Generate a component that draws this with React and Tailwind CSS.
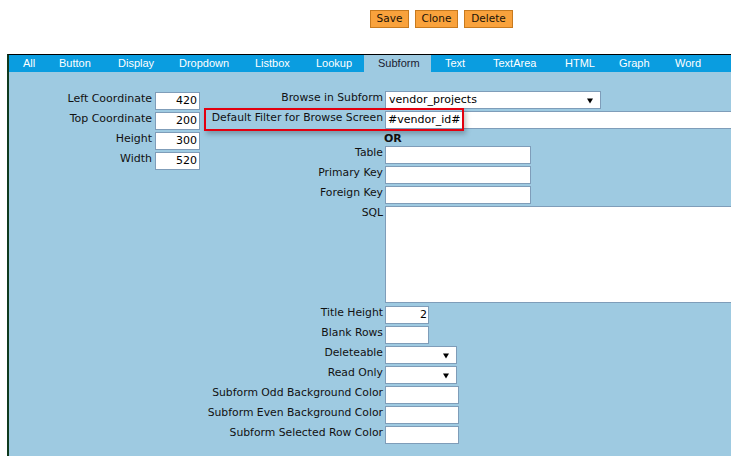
import React from 'react';

const tabs = [
    { name: 'All', w: 'w-[36px]' },
    { name: 'Button', w: 'w-[59px]' },
    { name: 'Display', w: 'w-[61px]' },
    { name: 'Dropdown', w: 'w-[76px]' },
    { name: 'Listbox', w: 'w-[61px]' },
    { name: 'Lookup', w: 'w-[62px]' },
    { name: 'Subform', w: 'w-[67px]', active: true },
    { name: 'Text', w: 'w-[48px]' },
    { name: 'TextArea', w: 'w-[72px]' },
    { name: 'HTML', w: 'w-[54px]' },
    { name: 'Graph', w: 'w-[56px]' },
    { name: 'Word', w: 'w-[56px]' },
];

const leftFields = [
    { label: 'Left Coordinate', value: '420' },
    { label: 'Top Coordinate', value: '200' },
    { label: 'Height', value: '300' },
    { label: 'Width', value: '520' },
];

const Arrow = () => (
    <svg width="6" height="6" viewBox="0 0 6 6" className="absolute right-[7px] top-[6px]">
        <polygon points="0,0.5 6,0.5 3,5.5" fill="#000" />
    </svg>
);

const Box = ({ className = '', children }) => (
    <div className={`h-[18px] bg-white border border-[#7f9db9] text-[11px] leading-[16px] text-black ${className}`}>
        {children}
    </div>
);

const Select = ({ className = '', value = '' }) => (
    <Box className={`relative pl-[3px] ${className}`}>
        {value}
        <Arrow />
    </Box>
);

const Row = ({ label, children, h = 'h-[20px]' }) => (
    <div className={`flex ${h}`}>
        <div className="w-[180px] shrink-0 pr-[2px] text-right whitespace-nowrap leading-[13px] text-[10.8px]">{label}</div>
        <div>{children}</div>
    </div>
);

const App = () => {
    return (
        <div
            className="relative w-[731px] h-[456px] overflow-hidden bg-white flex flex-col text-[11px] text-[#111]"
            style={{ fontFamily: '"DejaVu Sans", Verdana, sans-serif' }}
        >
            {/* action buttons */}
            <div className="h-[54px] pt-[10px] pl-[370px] flex gap-[6px] items-start">
                {['Save', 'Clone', 'Delete'].map((b, i) => (
                    <div
                        key={b}
                        className={`h-[18px] flex items-center justify-center bg-[#f9a23c] border border-[#c87a1e] text-[10.5px] text-[#1a1208] ${['w-[39px]', 'w-[43px]', 'w-[49px]'][i]}`}
                    >
                        {b}
                    </div>
                ))}
            </div>

            {/* panel */}
            <div className="ml-[7px] w-[740px] flex-1 flex flex-col border-l-2 border-l-[#0f3a1e] border-t border-t-black">
                <div className="h-[17px] bg-[#0a9de0] flex" style={{ fontFamily: '"Liberation Sans", Arial, sans-serif' }}>
                    {tabs.map((t) => (
                        <div
                            key={t.name}
                            className={`${t.w} shrink-0 pl-[14px] flex items-center text-[11px] ${t.active ? 'bg-[#9ecae1] text-[#1a1a30]' : 'text-white'}`}
                        >
                            {t.name}
                        </div>
                    ))}
                </div>

                <div className="flex-1 bg-[#9ecae1] pt-[19px] flex items-start">
                    {/* position / size */}
                    <div className="ml-[51px] pt-[1px] flex flex-col">
                        {leftFields.map((f) => (
                            <div key={f.label} className="flex h-[20px]">
                                <div className="w-[93px] pr-[1px] text-right whitespace-nowrap leading-[13px]">{f.label}</div>
                                <Box className="ml-[2px] w-[45px] text-right pr-[2px]">{f.value}</Box>
                            </div>
                        ))}
                    </div>

                    {/* subform settings */}
                    <div className="ml-[5px] flex flex-col">
                        <Row label="Browse in Subform">
                            <Select className="w-[216px]" value="vendor_projects" />
                        </Row>
                        <Row label="Default Filter for Browse Screen">
                            <Box className="w-[360px] pl-[2px]">#vendor_id#</Box>
                        </Row>
                        <Row label="" h="h-[15px]">
                            <div className="font-bold leading-[13px] pt-[1px] -ml-[1px]">OR</div>
                        </Row>
                        <Row label="Table">
                            <Box className="w-[146px]" />
                        </Row>
                        <Row label="Primary Key">
                            <Box className="w-[146px]" />
                        </Row>
                        <Row label="Foreign Key">
                            <Box className="w-[146px]" />
                        </Row>
                        <Row label="SQL" h="h-[100px]">
                            <textarea
                                readOnly
                                className="block w-[360px] h-[97px] bg-white border border-[#7f9db9] resize-none outline-none"
                            />
                        </Row>
                        <Row label="Title Height">
                            <Box className="w-[44px] text-right pr-[1px]">2</Box>
                        </Row>
                        <Row label="Blank Rows">
                            <Box className="w-[44px]" />
                        </Row>
                        <Row label="Deleteable">
                            <Select className="w-[72px]" />
                        </Row>
                        <Row label="Read Only">
                            <Select className="w-[72px]" />
                        </Row>
                        <Row label="Subform Odd Background Color">
                            <Box className="w-[74px]" />
                        </Row>
                        <Row label="Subform Even Background Color">
                            <Box className="w-[74px]" />
                        </Row>
                        <Row label="Subform Selected Row Color">
                            <Box className="w-[74px]" />
                        </Row>
                    </div>
                </div>
            </div>

            {/* highlight annotation */}
            <div className="absolute left-[204px] top-[108px] w-[260px] h-[23px] border-2 border-[#e3000f] shadow-[2px_3px_5px_rgba(0,0,0,0.25)] pointer-events-none" />
        </div>
    );
};

export default App;
